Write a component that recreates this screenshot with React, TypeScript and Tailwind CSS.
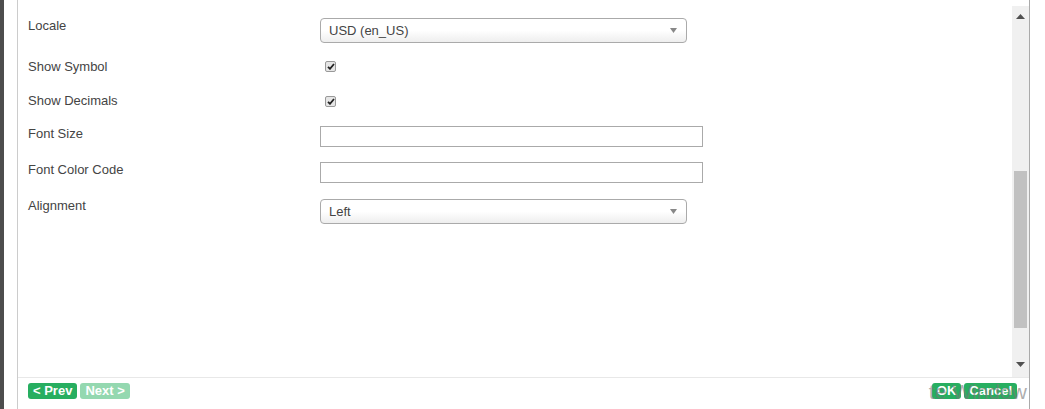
const rows = [
  { label: "Locale", h: "h-[41px]", kind: "select", value: "USD (en_US)", mt: "mt-[2px]" },
  { label: "Show Symbol", h: "h-[34px]", kind: "check", mt: "mt-[4px]" },
  { label: "Show Decimals", h: "h-[33px]", kind: "check", mt: "mt-[5px]" },
  { label: "Font Size", h: "h-[36px]", kind: "input", mt: "mt-[2px]" },
  { label: "Font Color Code", h: "h-[36px]", kind: "input", mt: "mt-[2px]" },
  { label: "Alignment", h: "h-[36px]", kind: "select", value: "Left", mt: "mt-[3px]" },
];

function Select({ value }: { value?: string }) {
  return (
    <div className="flex h-[25px] w-[367px] items-center justify-between rounded-[4px] border border-[#aaa] bg-gradient-to-b from-white from-50% to-[#eee] pl-[8px] pr-[9px] text-[13px] text-[#444]">
      <span>{value}</span>
      <svg width="7" height="5" viewBox="0 0 7 5">
        <path d="M0 0h7L3.5 5z" fill="#888" />
      </svg>
    </div>
  );
}

function Check() {
  return (
    <div className="ml-[5px] flex h-[11px] w-[11px] items-center justify-center rounded-[2px] border border-[#999] bg-[#e6e6e6]">
      <svg width="8" height="7" viewBox="0 0 8 7">
        <path d="M1 3.8l2 2L7 1" stroke="#222" strokeWidth="1.8" fill="none" />
      </svg>
    </div>
  );
}

const btn = "h-[16px] rounded-[3px] px-[5px] text-[13px] font-bold leading-[16px] text-white";

export default function App() {
  return (
    <div className="relative flex h-[409px] w-[1045px] overflow-hidden bg-white font-['Liberation_Sans',Arial,sans-serif]">
      {/* page behind the dialog */}
      <div className="flex w-[17px] bg-white">
        <div className="w-[4px] bg-[#4d4d4d]" />
      </div>

      <div className="flex flex-1 flex-col border-l border-[#ccc]">
        <div className="flex flex-1">
          <div className="flex-1 pl-[10px] pt-[16px]">
            {rows.map((r) => (
              <div key={r.label} className={`flex items-start ${r.h}`}>
                <div className="w-[292px] pt-[1px] text-[13px] leading-[18px] text-[#444]">{r.label}</div>
                <div className={r.mt}>
                  {r.kind === "select" && <Select value={r.value} />}
                  {r.kind === "check" && <Check />}
                  {r.kind === "input" && <div className="h-[21px] w-[383px] border border-[#aaa] bg-white" />}
                </div>
              </div>
            ))}
          </div>

          {/* scrollbar */}
          <div className="mt-[6px] flex w-[17px] flex-col items-center bg-[#f0f0f0]">
            <svg className="mt-[8px]" width="9" height="5" viewBox="0 0 9 5">
              <path d="M4.5 0L9 5H0z" fill="#505050" />
            </svg>
            <div className="mt-[152px] h-[157px] w-[13px] bg-[#c1c1c1]" />
            <svg className="mt-[34px]" width="9" height="5" viewBox="0 0 9 5">
              <path d="M0 0h9L4.5 5z" fill="#505050" />
            </svg>
          </div>
        </div>

        {/* footer */}
        <div className="flex h-[32px] items-start border-t border-[#e8e8e8] pl-[10px] pr-[12px] pt-[5px]">
          <button className={`${btn} bg-[#27ae60]`}>&lt; Prev</button>
          <button className={`${btn} ml-[3px] bg-[#94d8b0]`}>Next &gt;</button>
          <div className="relative ml-auto flex">
            <button className={`${btn} bg-[#27ae60]`}>OK</button>
            <button className={`${btn} ml-[3px] bg-[#27ae60]`}>Cancel</button>
            <span className="pointer-events-none absolute left-[-3px] top-[-3px] whitespace-nowrap text-[21px] leading-[24px] text-[#777]/60">
              te Window
            </span>
          </div>
        </div>
      </div>

      <div className="w-[16px] border-l border-[#aaa] bg-white" />
    </div>
  );
}
